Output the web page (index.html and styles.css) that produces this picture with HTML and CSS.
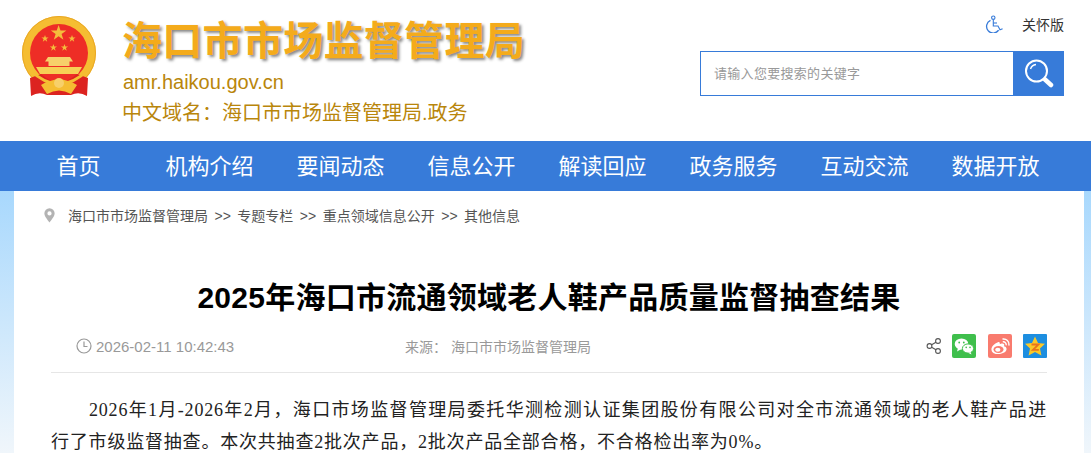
FILE: index.html
```html
<!DOCTYPE html>
<html lang="zh">
<head>
<meta charset="utf-8">
<title>海口市市场监督管理局</title>
<link rel="stylesheet" href="styles.css">
</head>
<body>
<header class="header">
  <div class="brand">
    <svg class="emblem" viewBox="0 0 76 82" width="76" height="82" aria-hidden="true">
      <circle cx="38" cy="39" r="37" fill="#f5bd32"/>
      <circle cx="38" cy="39" r="36.5" fill="none" stroke="#eaa825" stroke-width="1"/>
      <circle cx="38" cy="39" r="29" fill="#ee2d26"/>
      <path d="M9 64 L20 60 Q38 76 56 60 L67 64 L66 82 Q58 77 50 81 L26 81 Q18 77 10 82 Z" fill="#dc2320"/>
      <path d="M37.6 11 l1.9 5.6 5.9 0 -4.8 3.5 1.8 5.6 -4.8-3.4 -4.8 3.4 1.8-5.6 -4.8-3.5 5.9 0z" fill="#f4bd3c"/>
      <path d="M24 21 l.9 2.5 2.7 0 -2.2 1.6 .8 2.6 -2.2-1.6 -2.2 1.6 .8-2.6 -2.2-1.6 2.7 0z" fill="#f4bd3c"/>
      <path d="M51 21 l.9 2.5 2.7 0 -2.2 1.6 .8 2.6 -2.2-1.6 -2.2 1.6 .8-2.6 -2.2-1.6 2.7 0z" fill="#f4bd3c"/>
      <path d="M32.4 30 l.9 2.5 2.7 0 -2.2 1.6 .8 2.6 -2.2-1.6 -2.2 1.6 .8-2.6 -2.2-1.6 2.7 0z" fill="#f4bd3c"/>
      <path d="M43.5 30 l.9 2.5 2.7 0 -2.2 1.6 .8 2.6 -2.2-1.6 -2.2 1.6 .8-2.6 -2.2-1.6 2.7 0z" fill="#f4bd3c"/>
      <path d="M27 43 L49 43 L52 47.5 L48.5 47.5 L48.5 52 L27.5 52 L27.5 47.5 L24 47.5 Z" fill="#f7d06a"/>
      <path d="M15 53 L61 53 L57 60 L19 60 Z" fill="#f7cf55"/>
      <path d="M9 56 Q38 84 67 56" fill="none" stroke="#f5bd32" stroke-width="3"/>
      <path d="M20 71 Q38 60 56 71 L50 80 Q38 73 26 80 Z" fill="#f5bd32"/>
      <circle cx="38" cy="69" r="5" fill="#f7d06a"/>
    </svg>
    <div class="brand-text">
      <div class="brand-title">海口市市场监督管理局</div>
      <div class="brand-domain">amr.haikou.gov.cn</div>
      <div class="brand-cn">中文域名：海口市市场监督管理局.政务</div>
    </div>
  </div>
  <div class="tools">
    <div class="care">
      <svg class="care-icon" viewBox="0 0 18 18" width="18" height="18" aria-hidden="true">
        <circle cx="8.3" cy="2.7" r="1.7" fill="none" stroke="#377bd9" stroke-width="1.1"/>
        <path d="M8.3 4.8 V11 H13 L15 14.8 L17.6 13.7" fill="none" stroke="#377bd9" stroke-width="1.1"/>
        <path d="M8.3 8 H12" fill="none" stroke="#377bd9" stroke-width="1.1"/>
        <path d="M5.5 5.4 A6.6 6.6 0 1 0 13.6 15.2" fill="none" stroke="#377bd9" stroke-width="1.3"/>
      </svg>
      <span>关怀版</span>
    </div>
    <div class="search">
      <div class="search-input">请输入您要搜索的关键字</div>
      <div class="search-btn">
        <svg viewBox="0 0 30 30" width="30" height="30" aria-hidden="true">
          <circle cx="12.5" cy="12" r="10.5" fill="none" stroke="#fff" stroke-width="2"/>
          <path d="M6.5 10 A6.5 6.5 0 0 1 12 5.5" fill="none" stroke="#fff" stroke-width="1.4"/>
          <path d="M21 20.5 L27 26" stroke="#fff" stroke-width="4.5" stroke-linecap="round"/>
        </svg>
      </div>
    </div>
  </div>
</header>
<nav class="nav">
  <a class="nav-item">首页</a>
  <a class="nav-item">机构介绍</a>
  <a class="nav-item">要闻动态</a>
  <a class="nav-item">信息公开</a>
  <a class="nav-item">解读回应</a>
  <a class="nav-item">政务服务</a>
  <a class="nav-item">互动交流</a>
  <a class="nav-item">数据开放</a>
</nav>
<main class="page">
  <div class="crumbs">
    <svg viewBox="0 0 12 16" width="11" height="15" aria-hidden="true">
      <path fill-rule="evenodd" d="M6 0 A5.6 5.6 0 0 0 .4 5.6 C.4 9 4 13 6 15.5 C8 13 11.6 9 11.6 5.6 A5.6 5.6 0 0 0 6 0 Z M6 3.4 A2.3 2.3 0 1 1 6 8 A2.3 2.3 0 0 1 6 3.4 Z" fill="#b3b3b3"/>
    </svg>
    <span class="crumb-text">海口市市场监督管理局<span class="sep">&gt;&gt;</span>专题专栏<span class="sep">&gt;&gt;</span>重点领域信息公开<span class="sep">&gt;&gt;</span>其他信息</span>
  </div>
  <h1 class="title">2025年海口市流通领域老人鞋产品质量监督抽查结果</h1>
  <div class="meta">
    <div class="meta-time">
      <svg viewBox="0 0 16 16" width="16" height="16" aria-hidden="true">
        <circle cx="8" cy="8" r="7" fill="none" stroke="#999" stroke-width="1.2"/>
        <path d="M8 3.5 V8.5 H11.5" fill="none" stroke="#999" stroke-width="1.2"/>
      </svg>
      <span>2026-02-11 10:42:43</span>
    </div>
    <div class="meta-source">来源： 海口市市场监督管理局</div>
    <div class="share">
      <svg class="share-icon" viewBox="0 0 16 16" width="16" height="16" aria-hidden="true">
        <circle cx="3.5" cy="8" r="2.4" fill="none" stroke="#555" stroke-width="1.1"/>
        <circle cx="12" cy="3" r="2.4" fill="none" stroke="#555" stroke-width="1.1"/>
        <circle cx="12" cy="13" r="2.4" fill="none" stroke="#555" stroke-width="1.1"/>
        <path d="M5.6 6.8 L10 4.2 M5.6 9.2 L10 11.8" stroke="#555" stroke-width="1.1"/>
      </svg>
      <svg class="share-btn" viewBox="0 0 24 24" width="24" height="24" aria-hidden="true">
        <rect width="24" height="24" rx="2" fill="#3fbf4c"/>
        <ellipse cx="9.5" cy="10" rx="6.8" ry="5.6" fill="#fff"/>
        <path d="M6 14 L5 17.5 L9.5 15 Z" fill="#fff"/>
        <ellipse cx="16" cy="14.5" rx="5.6" ry="4.6" fill="#fff" stroke="#3fbf4c"/>
        <path d="M18.5 18 L19.5 20.5 L16 18.8 Z" fill="#fff"/>
        <circle cx="7.2" cy="8.5" r=".9" fill="#3fbf4c"/><circle cx="11.8" cy="8.5" r=".9" fill="#3fbf4c"/>
        <circle cx="14.2" cy="13.4" r=".8" fill="#3fbf4c"/><circle cx="18" cy="13.4" r=".8" fill="#3fbf4c"/>
      </svg>
      <svg class="share-btn" viewBox="0 0 24 24" width="24" height="24" aria-hidden="true">
        <rect width="24" height="24" rx="2" fill="#f97b6e"/>
        <path d="M10.5 8 C6 9.5 3 13 3.5 16 C4 19.5 8 20.5 11.5 20 C15.5 19.5 19 17.5 18.5 14.5 C18.2 13 16.8 12.5 16 12.3 C16.8 10.5 16 9.5 14.5 9.5 C13 9.5 12 10.2 11.8 10 C12 8.5 11.5 7.8 10.5 8 Z" fill="#fff"/>
        <ellipse cx="10.5" cy="15.5" rx="5" ry="3.4" fill="#f97b6e"/>
        <ellipse cx="9.8" cy="15.8" rx="2.6" ry="2" fill="#fff"/>
        <path d="M15 5 A5.5 5.5 0 0 1 21 11 M15.3 7.8 A2.8 2.8 0 0 1 18.2 10.8" fill="none" stroke="#fff" stroke-width="1.4" stroke-linecap="round"/>
      </svg>
      <svg class="share-btn" viewBox="0 0 24 24" width="24" height="24" aria-hidden="true">
        <rect width="24" height="24" rx="1" fill="#1d8ee0"/>
        <path d="M12 2.5 L15 9 L22 9.8 L17 14.6 L18.4 21.5 L12 18 L5.6 21.5 L7 14.6 L2 9.8 L9 9 Z" fill="#fbc827"/>
        <path d="M8.5 10.5 H15.5 L10 15.8 H15.8" fill="none" stroke="#e8731c" stroke-width="1.8"/>
      </svg>
    </div>
  </div>
  <article class="article">
    <p class="para"><span class="line-first">2026年1月-2026年2月，海口市场监督管理局委托华测检测认证集团股份有限公司对全市流通领域的老人鞋产品进</span><span class="line-last">行了市级监督抽查。本次共抽查2批次产品，2批次产品全部合格，不合格检出率为0%。</span></p>
  </article>
</main>
</body>
</html>
```
FILE: styles.css
```css
* { box-sizing: border-box; }
html, body { margin: 0; padding: 0; }
body {
  height: 453px;
  overflow: hidden;
  background: linear-gradient(#a8d8fd 191px, #f0f6fb 453px);
  font-family: "Liberation Sans", "Noto Sans CJK SC", sans-serif;
  color: #333;
}
.header {
  height: 141px;
  background: #fff;
  display: flex;
  justify-content: space-between;
  padding: 14px 27px 0 21px;
}
.brand { display: flex; gap: 24px; }
.brand-title {
  font-size: 40px;
  line-height: 48px;
  font-weight: 700;
  letter-spacing: .3px;
  color: #f4ab1b;
  text-shadow: 2px 2px 3px #888;
  margin-top: 3px;
  padding-left: 1px;
}
.brand-domain { font-size: 20px; line-height: 24px; color: #b9860b; margin-top: 5px; padding-left: 2px; }
.brand-cn { font-size: 20px; line-height: 26px; color: #b9860b; margin-top: 6px; padding-left: 1px; }
.tools { display: flex; flex-direction: column; align-items: flex-end; }
.care { display: flex; align-items: center; gap: 19px; font-size: 14px; color: #333; height: 20px; }
.search { display: flex; width: 364px; height: 45px; margin-top: 17px; border: 1px solid #377bd9; }
.search-input { flex: 1; padding-left: 13px; font-size: 13px; line-height: 44px; letter-spacing: .3px; color: #999; }
.search-btn { width: 51px; background: #377bd9; margin: -1px -1px -1px 0; display: flex; align-items: center; justify-content: center; }
.nav {
  height: 50px;
  background: #377bd9;
  display: grid;
  grid-template-columns: repeat(8, 131px);
  padding-left: 13px;
}
.nav-item { color: #fff; font-size: 22px; text-align: center; line-height: 51px; }
.page {
  width: 1070px;
  margin-left: 14px;
  height: 262px;
  background: #fff;
  padding: 0 37px;
}
.crumbs { display: flex; align-items: center; gap: 13px; height: 48px; font-size: 14px; color: #555; margin-left: -7px; }
.sep { margin: 0 6.5px; }
.title { margin: 29px 0 0; font-size: 30px; line-height: 60px; letter-spacing: .26px; text-align: center; color: #000; font-weight: 700; }
.meta { display: flex; align-items: center; height: 53px; margin-top: -8px; border-bottom: 1px solid #e6e6e6; color: #999; padding-left: 25px; }
.meta-time { display: flex; align-items: center; gap: 4px; width: 329px; font-size: 15px; }
.meta-source { flex: 1; font-size: 14px; }
.share { display: flex; align-items: center; gap: 11.5px; }
.share-icon { margin-right: -1px; }
.para { margin: 0; padding-top: 21px; font-family: "Liberation Serif", "Noto Sans CJK SC", serif; font-size: 18px; line-height: 32px; letter-spacing: .8px; color: #222; }
.line-first { display: block; text-align: justify; text-align-last: justify; padding-left: 38px; }
.line-last { display: block; }
```
